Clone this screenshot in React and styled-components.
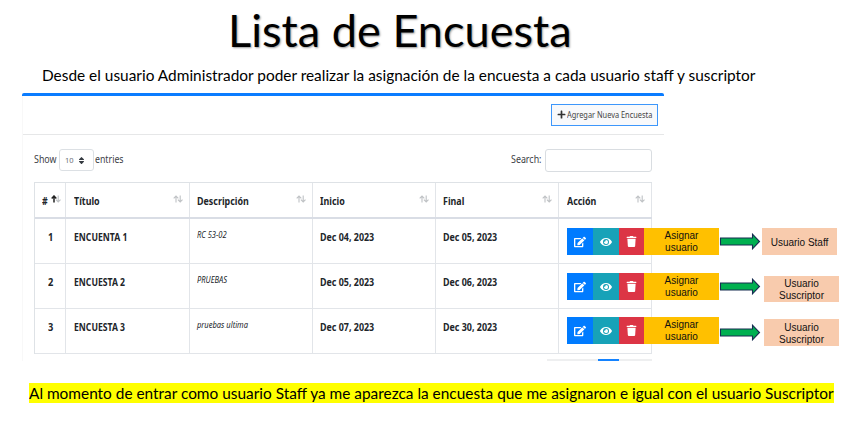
import React from 'react';
import styled, { createGlobalStyle, css } from 'styled-components';
import { FaPlus, FaEdit, FaEye, FaTrash, FaSort } from 'react-icons/fa';

const GlobalStyle = createGlobalStyle`
  *, *::before, *::after { box-sizing: border-box; }
  body { margin: 0; background: #fff; overflow: hidden; }
`;

const sourceSans = css`font-family: "Noto Sans", "Open Sans", sans-serif;`;
const calibri = css`font-family: "Lato", "Open Sans", sans-serif;`;

const Slide = styled.main`
  width: 852px;
  height: 434px;
  display: flex;
  flex-direction: column;
  background: #fff;
  color: #000;
  ${calibri}
`;

/* Text narrowed horizontally to the proportions of a condensed face. */
const Condensed = styled.span`
  display: inline-block;
  white-space: nowrap;
  transform: scaleX(${(p) => p.$x});
  transform-origin: left center;
`;

const Title = styled.h1`
  margin: 0;
  height: 62px;
  padding-left: 228px;
  font-size: 45px;
  font-weight: 400;
  line-height: 60px;
  text-shadow: 1px 1px 2px rgba(0, 0, 0, 0.4);
`;

const Subtitle = styled.p`
  margin: 0;
  height: 31px;
  padding-left: 42px;
  font-size: 16px;
  line-height: 25px;
`;

const Card = styled.section`
  width: 642px;
  height: 268px;
  margin-left: 22px;
  padding-left: 1px;
  flex: none;
  border-top: 3px solid #0a7cff;
  border-radius: 2px 2px 0 0;
  box-shadow: inset 1px 0 0 #f8f8f8;
  color: #212529;
  ${sourceSans}
`;

const CardHeader = styled.header`
  height: 39px;
  padding: 8px 6px 0 0;
  display: flex;
  justify-content: flex-end;
  border-bottom: 1px solid #e6e7e8;
`;

const AddButton = styled.button`
  width: 107px;
  height: 22px;
  padding: 0 0 1px 5px;
  display: flex;
  align-items: center;
  gap: 1px;
  border: 1px solid #3d97fb;
  background: #f8f9fb;
  color: #444;
  font-size: 9.6px;
  ${sourceSans}
  svg { flex: none; color: #333; }
`;

const Controls = styled.div`
  height: 47px;
  padding: 14px 12px 0 11px;
  display: flex;
  font-size: 11.4px;
  line-height: 20px;
  color: #3c4146;
`;

const ControlLabel = styled.span`
  flex: none;
  width: ${(p) => p.$w}px;
`;

const LengthSelect = styled.div`
  width: 35px;
  height: 22px;
  margin-right: 1px;
  padding: 0 7px 0 5px;
  display: flex;
  align-items: center;
  justify-content: space-between;
  border: 1px solid #dce0e4;
  border-radius: 3px;
  color: #6b7075;
  font-size: 7.5px;
  svg { color: #343a40; }
`;

const SearchInput = styled.input`
  width: 107px;
  height: 23px;
  border: 1px solid #d9dde1;
  border-radius: 3px;
  background: #fff;
`;

const Spacer = styled.div`flex: 1;`;

const Table = styled.div`
  width: 618px;
  margin-left: 11px;
  border-left: 1px solid #dee2e6;
  border-top: 1px solid #dee2e6;
`;

const Row = styled.div`
  display: grid;
  grid-template-columns: 31px 124px 123px 123px 123px 93px;
  height: ${(p) => (p.$head ? 36 : 45)}px;
  border-bottom: ${(p) => (p.$head ? 2 : 1)}px solid ${(p) => (p.$head ? '#d9dde5' : '#e2e5e9')};
`;

const Cell = styled.div`
  display: flex;
  min-width: 0;
  padding: ${(p) => (p.$top ?? 10)}px 0 0 ${(p) => (p.$left ?? 7)}px;
  border-right: 1px solid #e2e5e9;
  font-size: 11px;
  font-weight: 700;
  line-height: 15px;
`;

const HeadCell = styled(Cell)`
  justify-content: space-between;
  padding-right: ${(p) => p.$right ?? 6}px;
`;

const Description = styled(Cell)`
  font-size: 9.2px;
  font-weight: 400;
  font-style: italic;
`;

const SortIcon = styled.svg`
  flex: none;
  width: 10px;
  height: 8px;
  margin-top: 2px;
  fill: none;
  stroke: #bfc2c5;
  stroke-width: 1.1;
`;

const ActionButton = styled.button`
  flex: none;
  width: ${(p) => p.$w}px;
  height: 27px;
  padding: 0;
  display: flex;
  align-items: center;
  justify-content: center;
  border: 0;
  background: ${(p) => p.$bg};
  color: #fff;
`;

const Tag = styled.div`
  flex: none;
  width: 75px;
  height: ${(p) => p.$h ?? 27}px;
  margin: ${(p) => p.$offset ?? 0}px 0 0 ${(p) => p.$gap ?? 0}px;
  padding-top: ${(p) => p.$pad ?? 2}px;
  display: flex;
  align-items: center;
  justify-content: center;
  text-align: center;
  background: ${(p) => p.$bg};
  color: #111;
  font: 400 10px/12px "Liberation Sans", Arial, sans-serif;
`;

const Arrow = styled.svg`
  flex: none;
  width: 42px;
  height: 17px;
  margin: ${(p) => p.$offset}px 0 0 0;
`;

const Pagination = styled.div`
  height: 2px;
  width: 105px;
  margin: 5px 12px 0 auto;
  display: flex;
  background: #eeeff0;
`;

const ActivePage = styled.div`
  width: 21px;
  height: 2px;
  margin-left: 51px;
  background: #1483ff;
`;

const Footnote = styled.p`
  width: 805px;
  height: 20px;
  margin: 22px 0 0 29px;
  flex: none;
  background: #ff0;
  font-size: 16px;
  line-height: 20px;
`;

const columns = ['Título', 'Descripción', 'Inicio', 'Final', 'Acción'];

const surveys = [
  { id: 1, title: 'ENCUENTA 1', text: 'RC 53-02', start: 'Dec 04, 2023', end: 'Dec 05, 2023', target: ['Usuario Staff'], top: 9, arrow: 5, offset: 0, gap: 1, h: 27 },
  { id: 2, title: 'ENCUESTA 2', text: 'PRUEBAS', start: 'Dec 05, 2023', end: 'Dec 06, 2023', target: ['Usuario', 'Suscriptor'], top: 9, arrow: 5, offset: 3, gap: 3, h: 26 },
  { id: 3, title: 'ENCUESTA 3', text: 'pruebas ultima', start: 'Dec 07, 2023', end: 'Dec 30, 2023', target: ['Usuario', 'Suscriptor'], top: 8, arrow: 7, offset: 2, gap: 3, h: 27 },
];

function Sort({ active }) {
  return (
    <SortIcon viewBox="0 0 10 8">
      <path d="M3 7.5V1M0.7 3.4L3 1l2.3 2.4" stroke={active ? '#222' : undefined} strokeWidth={active ? 1.5 : undefined} />
      <path d="M7.2 0.5V7M4.9 4.6L7.2 7l2.3-2.4" />
    </SortIcon>
  );
}

function SurveyRow({ survey }) {
  return (
    <Row>
      <Cell $left={13}><Condensed $x={0.84}>{survey.id}</Condensed></Cell>
      <Cell $left={8}><Condensed $x={0.785}>{survey.title}</Condensed></Cell>
      <Description $top={8}><Condensed $x={0.82}>{survey.text}</Condensed></Description>
      <Cell><Condensed $x={0.81}>{survey.start}</Condensed></Cell>
      <Cell><Condensed $x={0.81}>{survey.end}</Condensed></Cell>
      <Cell $left={8} $top={survey.top}>
        <ActionButton $w={26} $bg="#007bff"><FaEdit size={12} /></ActionButton>
        <ActionButton $w={26} $bg="#17a2b8"><FaEye size={12} /></ActionButton>
        <ActionButton $w={25} $bg="#dc3545"><FaTrash size={11} /></ActionButton>
        <Tag $bg="#ffc000" $pad={0}>Asignar<br />usuario</Tag>
        <Arrow viewBox="0 0 42 17" $offset={survey.arrow}>
          <path d="M1.5 5h32V1.2l7 7.3-7 7.3V12h-32z" fill="#00b050" stroke="#172c51" strokeWidth="1.1" />
        </Arrow>
        <Tag $bg="#f8cbad" $offset={survey.offset} $gap={survey.gap} $h={survey.h}>
          <span>{survey.target[0]}{survey.target[1] && <><br />{survey.target[1]}</>}</span>
        </Tag>
      </Cell>
    </Row>
  );
}

export default function App() {
  return (
    <Slide>
      <GlobalStyle />
      <Title><Condensed $x={1.003}>Lista de Encuesta</Condensed></Title>
      <Subtitle>
        <Condensed $x={0.963}>Desde el usuario Administrador poder realizar la asignación de la encuesta a cada usuario staff y suscriptor</Condensed>
      </Subtitle>
      <Card>
        <CardHeader>
          <AddButton><FaPlus size={9} /><Condensed $x={0.77}>Agregar Nueva Encuesta</Condensed></AddButton>
        </CardHeader>
        <Controls>
          <ControlLabel $w={25}><Condensed $x={0.78}>Show</Condensed></ControlLabel>
          <LengthSelect>10<FaSort size={9} /></LengthSelect>
          <ControlLabel $w={30}><Condensed $x={0.77}>entries</Condensed></ControlLabel>
          <Spacer />
          <ControlLabel $w={34}><Condensed $x={0.78}>Search:</Condensed></ControlLabel>
          <SearchInput aria-label="Search" />
        </Controls>
        <Table>
          <Row $head>
            <HeadCell $left={7} $right={4}><Condensed $x={0.8}>#</Condensed><Sort active /></HeadCell>
            {columns.map((label, i) => (
              <HeadCell key={label} $left={i === 0 || i === 4 ? 8 : 7}>
                <Condensed $x={0.81}>{label}</Condensed><Sort />
              </HeadCell>
            ))}
          </Row>
          {surveys.map((s) => <SurveyRow key={s.id} survey={s} />)}
        </Table>
        <Pagination><ActivePage /></Pagination>
      </Card>
      <Footnote>
        <Condensed $x={0.962}>Al momento de entrar como usuario Staff ya me aparezca la encuesta que me asignaron e igual con el usuario Suscriptor</Condensed>
      </Footnote>
    </Slide>
  );
}
